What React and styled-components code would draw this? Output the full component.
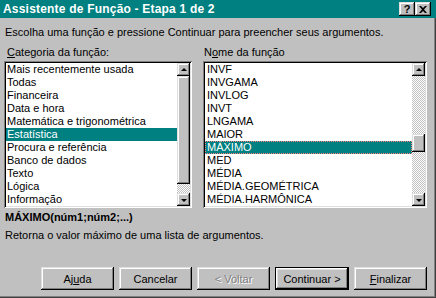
import styled, { createGlobalStyle, css } from 'styled-components'

const GlobalStyle = createGlobalStyle`
  html, body {
    margin: 0;
    padding: 0;
    background: #c0c0c0;
  }
  body {
    font-family: 'Liberation Sans', Arial, sans-serif;
    font-size: 11px;
    color: #000;
  }
`

const raised = css`
  box-shadow: inset -1px -1px #000, inset 1px 1px #dfdfdf,
    inset -2px -2px #808080, inset 2px 2px #fff;
`

const Window = styled.div`
  width: 436px;
  height: 298px;
  display: flex;
  flex-flow: column nowrap;
  background: #c0c0c0;
  overflow: hidden;
`

const TitleBar = styled.div`
  height: 18px;
  flex: none;
  background: #008080;
  color: #fff;
  display: flex;
  align-items: center;
  justify-content: space-between;
  padding: 0 5px 0 3px;
`

const Title = styled.span`
  font-weight: bold;
  font-size: 12px;
  letter-spacing: 0.2px;
`

const CaptionButtons = styled.div`
  display: flex;
  gap: 0;
`

const CaptionButton = styled.div`
  width: 16px;
  height: 14px;
  background: #c0c0c0;
  color: #000;
  display: flex;
  align-items: center;
  justify-content: center;
  font-weight: bold;
  font-size: 11px;
  ${raised}
`

const Body = styled.div`
  flex: 1;
  display: flex;
  flex-flow: column nowrap;
  padding: 8px 9px 0 4px;
  box-shadow: inset -1px -1px #404040, inset -2px -2px #808080;
`

const Line = styled.div`
  height: 13px;
  line-height: 13px;
  padding-left: ${({ indent }) => indent ?? 1}px;
  font-weight: ${({ bold }) => (bold ? 'bold' : 'normal')};
  margin-top: ${({ top }) => top ?? 0}px;
  white-space: nowrap;
`

const Columns = styled.div`
  display: grid;
  grid-template-columns: 188px 224px;
  column-gap: 11px;
  margin-top: ${({ top }) => top ?? 0}px;
`

const Label = styled.div`
  height: 13px;
  line-height: 13px;
  padding-left: ${({ indent }) => indent}px;
`

const ListBox = styled.div`
  height: 147px;
  box-sizing: border-box;
  background: #fff;
  padding: 2px;
  display: flex;
  box-shadow: inset 1px 1px #808080, inset -1px -1px #fff,
    inset 2px 2px #000, inset -2px -2px #dfdfdf;
`

const Items = styled.div`
  flex: 1;
  display: flex;
  flex-flow: column nowrap;
  overflow: hidden;
`

const Item = styled.div`
  height: 13px;
  line-height: 13px;
  flex: none;
  padding-left: ${({ indent }) => indent}px;
  box-sizing: border-box;
  white-space: nowrap;
  ${({ selected }) =>
    selected &&
    css`
      background: #008080;
      color: #fff;
    `}
  ${({ focused }) =>
    focused &&
    css`
      outline: 1px dotted #ff8080;
      outline-offset: -1px;
    `}
`

const ScrollBar = styled.div`
  width: 13px;
  flex: none;
  display: flex;
  flex-flow: column nowrap;
`

const ArrowButton = styled.div`
  height: 13px;
  flex: none;
  background: #c0c0c0;
  display: flex;
  align-items: center;
  justify-content: center;
  ${raised}

  &::after {
    content: '';
    width: 0;
    height: 0;
    border-left: 3px solid transparent;
    border-right: 3px solid transparent;
    ${({ down }) =>
      down
        ? 'border-top: 3px solid #000; margin-top: 1px;'
        : 'border-bottom: 3px solid #000; margin-top: -1px;'}
  }
`

const Track = styled.div`
  flex: ${({ grow }) => grow ?? 1};
  background-color: #c0c0c0;
  background-image: conic-gradient(#fff 25%, #c0c0c0 0 50%, #fff 0 75%, #c0c0c0 0);
  background-size: 2px 2px;
`

const Thumb = styled.div`
  height: ${({ size }) => size}px;
  flex: none;
  background: #c0c0c0;
  ${raised}
`

const Footer = styled.div`
  display: flex;
  justify-content: flex-end;
  gap: 5px;
  margin-top: 25px;
`

const Button = styled.div`
  width: ${({ primary }) => (primary ? 74 : 73)}px;
  height: 23px;
  box-sizing: border-box;
  display: flex;
  align-items: center;
  justify-content: center;
  background: #c0c0c0;
  color: ${({ disabled }) => (disabled ? '#808080' : '#000')};
  text-shadow: ${({ disabled }) => (disabled ? '1px 1px #fff' : 'none')};
  ${({ primary }) =>
    primary
      ? css`
          border: 1px solid #000;
          box-shadow: inset -1px -1px #000, inset 1px 1px #fff,
            inset -2px -2px #808080, inset 2px 2px #dfdfdf;
        `
      : raised}
`

const U = styled.span`
  text-decoration: underline;
  text-underline-offset: 1px;
`

const categories = [
  'Mais recentemente usada',
  'Todas',
  'Financeira',
  'Data e hora',
  'Matemática e trigonométrica',
  'Estatística',
  'Procura e referência',
  'Banco de dados',
  'Texto',
  'Lógica',
  'Informação'
]

const functions = [
  'INVF',
  'INVGAMA',
  'INVLOG',
  'INVT',
  'LNGAMA',
  'MAIOR',
  'MÁXIMO',
  'MED',
  'MÉDIA',
  'MÉDIA.GEOMÉTRICA',
  'MÉDIA.HARMÔNICA'
]

const CloseIcon = () => (
  <svg width='8' height='7' viewBox='0 0 8 7'>
    <path d='M0 0h2l2 2 2-2h2L5 3.5 8 7H6L4 5 2 7H0l3-3.5z' fill='#000' />
  </svg>
)

export default function App() {
  return (
    <>
      <GlobalStyle />
      <Window>
        <TitleBar>
          <Title>Assistente de Função - Etapa 1 de 2</Title>
          <CaptionButtons>
            <CaptionButton>?</CaptionButton>
            <CaptionButton>
              <CloseIcon />
            </CaptionButton>
          </CaptionButtons>
        </TitleBar>
        <Body>
          <Line>
            Escolha uma função e pressione Continuar para preencher seus
            argumentos.
          </Line>
          <Columns top={7}>
            <Label indent={3}>
              <U>C</U>ategoria da função:
            </Label>
            <Label indent={1}>
              N<U>o</U>me da função
            </Label>
          </Columns>
          <Columns top={2}>
            <ListBox>
              <Items>
                {categories.map(name => (
                  <Item key={name} indent={1} selected={name === 'Estatística'}>
                    {name}
                  </Item>
                ))}
              </Items>
              <ScrollBar>
                <ArrowButton />
                <Thumb size={108} />
                <Track />
                <ArrowButton down />
              </ScrollBar>
            </ListBox>
            <ListBox>
              <Items>
                {functions.map(name => (
                  <Item
                    key={name}
                    indent={2}
                    selected={name === 'MÁXIMO'}
                    focused={name === 'MÁXIMO'}
                  >
                    {name}
                  </Item>
                ))}
              </Items>
              <ScrollBar>
                <ArrowButton />
                <Track grow={58} />
                <Thumb size={18} />
                <Track grow={41} />
                <ArrowButton down />
              </ScrollBar>
            </ListBox>
          </Columns>
          <Line bold top={3}>
            MÁXIMO(núm1;núm2;...)
          </Line>
          <Line top={5}>Retorna o valor máximo de uma lista de argumentos.</Line>
          <Footer>
            <Button>
              Aj<U>u</U>da
            </Button>
            <Button>Cancelar</Button>
            <Button disabled>&lt; Voltar</Button>
            <Button primary>Continuar &gt;</Button>
            <Button>
              <U>F</U>inalizar
            </Button>
          </Footer>
        </Body>
      </Window>
    </>
  )
}
